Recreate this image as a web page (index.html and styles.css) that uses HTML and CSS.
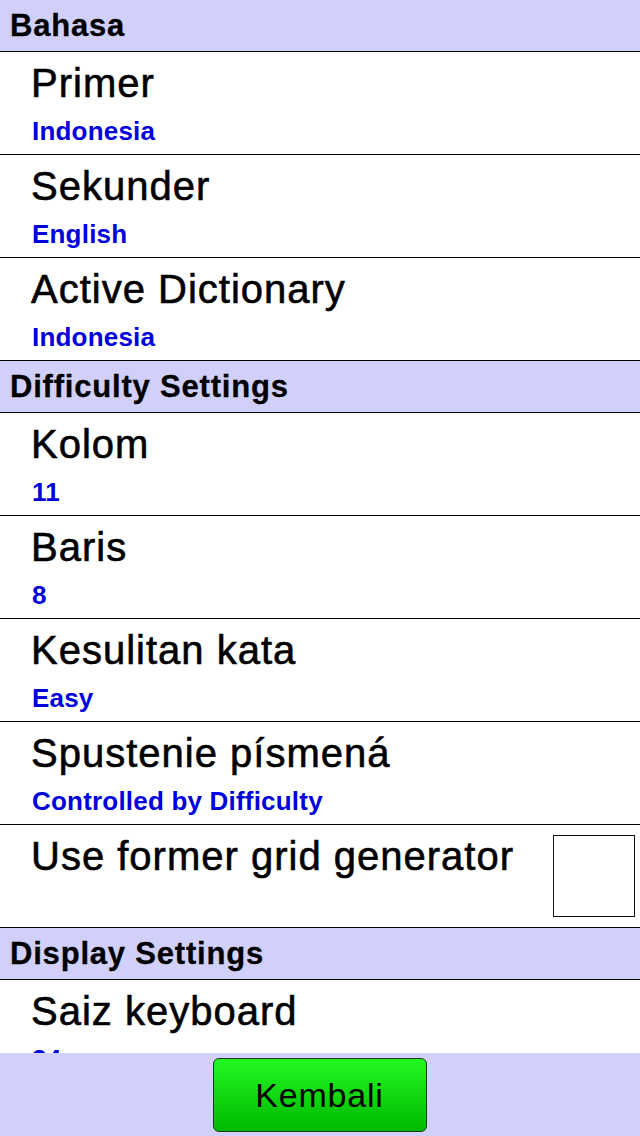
FILE: index.html
```html
<!DOCTYPE html>
<html>
<head>
<meta charset="utf-8">
<link rel="stylesheet" href="styles.css">
</head>
<body>
<div class="screen">
  <div class="list">
    <div class="section">Bahasa</div>
    <div class="item"><div class="texts"><div class="title">Primer</div><div class="value">Indonesia</div></div></div>
    <div class="item"><div class="texts"><div class="title">Sekunder</div><div class="value">English</div></div></div>
    <div class="item"><div class="texts"><div class="title">Active Dictionary</div><div class="value">Indonesia</div></div></div>
    <div class="section">Difficulty Settings</div>
    <div class="item"><div class="texts"><div class="title">Kolom</div><div class="value">11</div></div></div>
    <div class="item"><div class="texts"><div class="title">Baris</div><div class="value">8</div></div></div>
    <div class="item"><div class="texts"><div class="title">Kesulitan kata</div><div class="value">Easy</div></div></div>
    <div class="item"><div class="texts"><div class="title">Spustenie písmená</div><div class="value">Controlled by Difficulty</div></div></div>
    <div class="item"><div class="texts"><div class="title">Use former grid generator</div></div><div class="checkbox"></div></div>
    <div class="section">Display Settings</div>
    <div class="item"><div class="texts"><div class="title">Saiz keyboard</div><div class="value">24</div></div></div>
  </div>
  <div class="footer">
    <button class="back">Kembali</button>
  </div>
</div>
</body>
</html>
```
FILE: styles.css
```css
html, body {
  margin: 0;
  padding: 0;
  background: #ffffff;
}
.screen {
  width: 640px;
  height: 1136px;
  display: flex;
  flex-direction: column;
  font-family: "Liberation Sans", Arial, sans-serif;
  color: #000;
}
.list {
  height: 1053px;
  overflow: hidden;
  flex: none;
}
.section {
  height: 51px;
  line-height: 51px;
  border-bottom: 1px solid #000;
  background: #d0d0fa;
  font-size: 31px;
  font-weight: bold;
  letter-spacing: 0.8px;
  padding-left: 10px;
  color: #000;
  -webkit-text-stroke: 0.3px #000;
}
.item {
  height: 102px;
  border-bottom: 1px solid #000;
  display: flex;
  justify-content: space-between;
  align-items: flex-start;
  background: #fff;
}
.texts {
  padding-left: 31px;
  padding-top: 6px;
}
.title {
  font-size: 40px;
  line-height: 50px;
  letter-spacing: 1px;
  white-space: nowrap;
  -webkit-text-stroke: 0.6px #000;
}
.value {
  margin-top: 5px;
  font-size: 26px;
  line-height: 36px;
  font-weight: bold;
  letter-spacing: 0.2px;
  color: #0000dd;
  padding-left: 1px;
}
.checkbox {
  width: 80px;
  height: 80px;
  border: 1px solid #111;
  margin-top: 10px;
  margin-right: 5px;
  background: #fff;
}
.footer {
  flex: 1;
  background: #d0d0fa;
  display: flex;
  justify-content: center;
  align-items: flex-start;
  padding-top: 5px;
  box-sizing: border-box;
}
.back {
  width: 214px;
  height: 74px;
  border: 1px solid #1a3a1a;
  border-radius: 6px;
  background: linear-gradient(to bottom, #22f822, #00b800);
  font-family: "Liberation Sans", Arial, sans-serif;
  font-size: 34px;
  letter-spacing: 0.8px;
  color: #000;
  padding: 0;
  margin-right: 1px;
}
```
